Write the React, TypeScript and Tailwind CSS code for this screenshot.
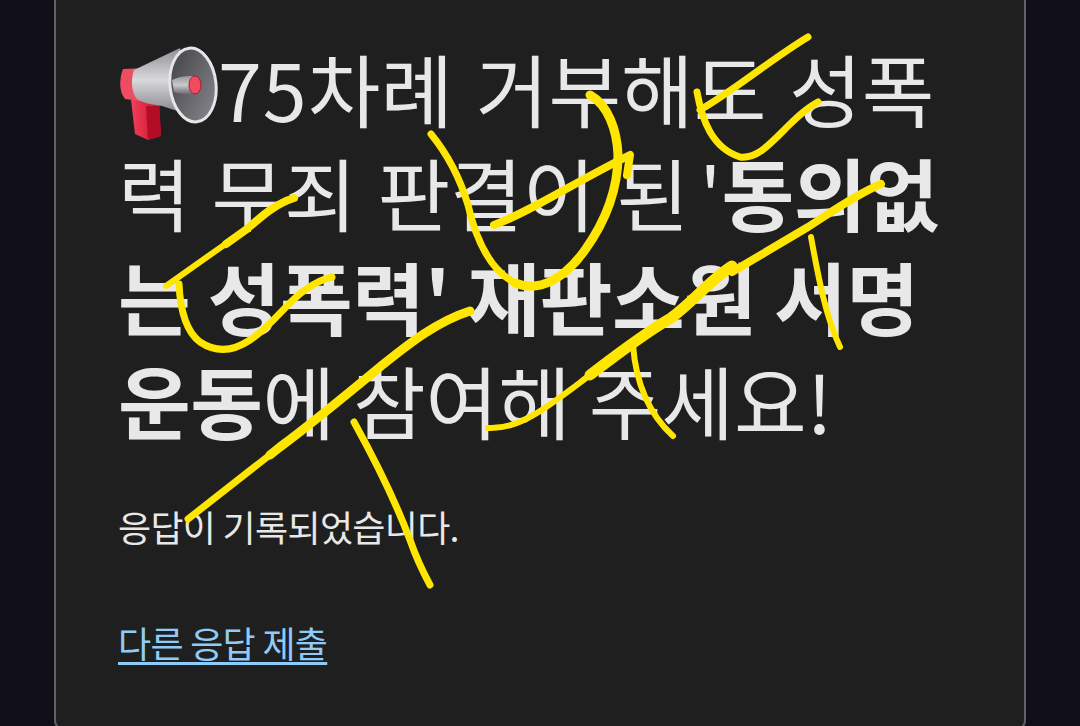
const strokes = [
  { d: "M166 286 L207 257 L247 229", w: 6 },
  { d: "M226 244 L247 229 C262 216 275 204 294 198", w: 8 },
  { d: "M179 284 C180 305 184 330 200 342 C215 352 232 352 250 340 C272 326 288 301 305 290 C315 283 322 279 332 277", w: 7 },
  { d: "M188 519 L280 447", w: 7 },
  { d: "M270 455 L280 447 C310 425 345 396 380 367 C405 347 435 322 470 311", w: 9 },
  { d: "M431 134 C448 155 460 178 468 205 C476 240 490 270 515 283", w: 7 },
  { d: "M515 283 C540 293 565 278 585 250 C605 222 618 190 618 155 C617 130 608 105 590 95", w: 9 },
  { d: "M494 225 C530 212 575 182 630 155 L627 175", w: 8 },
  { d: "M488 428 C520 430 550 405 590 375", w: 6 },
  { d: "M590 375 C620 352 650 330 671 318 C695 300 710 280 732 266", w: 11 },
  { d: "M732 272 L808 227 C830 213 855 195 881 184", w: 8 },
  { d: "M633 345 C636 385 650 415 673 436", w: 6 },
  { d: "M697 92 C702 120 712 148 740 157 C767 160 785 120 818 102", w: 7 },
  { d: "M700 110 C735 90 770 60 808 37", w: 7 },
  { d: "M811 237 C818 275 825 315 840 347", w: 6 },
  { d: "M354 422 C375 460 395 500 410 540 C417 560 423 572 430 585", w: 7 },
];

function Megaphone() {
  return (
    <svg viewBox="0 0 100 96" className="inline-block -my-[20px] h-[96px] w-[100px] align-baseline">
      <defs>
        <linearGradient id="cone" x1="0" y1="0" x2="0" y2="1">
          <stop offset="0" stopColor="#8f8f94" />
          <stop offset="0.45" stopColor="#d9d9dc" />
          <stop offset="1" stopColor="#77777d" />
        </linearGradient>
        <linearGradient id="bell" x1="0" y1="0" x2="1" y2="1">
          <stop offset="0" stopColor="#3f3f44" />
          <stop offset="1" stopColor="#8a8a90" />
        </linearGradient>
        <linearGradient id="inner" x1="0" y1="0" x2="0" y2="1">
          <stop offset="0" stopColor="#97979c" />
          <stop offset="0.5" stopColor="#c9c9cc" />
          <stop offset="1" stopColor="#6d6d72" />
        </linearGradient>
        <linearGradient id="red" x1="0" y1="0" x2="1" y2="0">
          <stop offset="0" stopColor="#f0405a" />
          <stop offset="1" stopColor="#c80f2c" />
        </linearGradient>
      </defs>
      <path d="M13 54 L41 52 L43 90 L30 94 L17 88 Z" fill="url(#red)" />
      <path d="M30 94 L43 90 L41 60 L28 60 Z" fill="#b30d25" />
      <path d="M5 23 C1 33 1 46 7 53 L22 55 L27 22 Z" fill="#ed4d63" />
      <path d="M16 24 L62 2 L84 73 L44 60 C30 58 22 56 18 52 C13 44 13 32 16 24 Z" fill="url(#cone)" />
      <ellipse cx="75" cy="39" rx="23" ry="37" transform="rotate(-6 75 39)" fill="url(#bell)" stroke="#e6e6e8" strokeWidth="3" />
      <path d="M54 34 C62 30 70 30 77 30 L77 48 C70 48 62 48 56 46 Z" fill="url(#inner)" />
      <ellipse cx="77" cy="39" rx="6" ry="9" fill="#f04b60" stroke="#a81c30" strokeWidth="1" />
    </svg>
  );
}

export default function App() {
  return (
    <div className="relative h-[726px] w-[1080px] overflow-hidden bg-[#100f18] font-['Noto_Sans_CJK_KR','Noto_Sans',sans-serif]">
      <div className="ml-[54px] box-border h-[732px] w-[972px] rounded-b-xl border-x-2 border-b-2 border-[#5f6368] bg-[#1f1f1f] pl-[62px] pt-[36px] text-[#e8e8e8]">
        <h1 className="h-[416px] whitespace-nowrap text-[79px] font-normal leading-[104px] [word-spacing:3px]">
          <span className="[word-spacing:5px]"><Megaphone /><span className="tracking-[1px]">75</span>차례 거부해도 성폭</span><br />
          력 무죄 판결이 된<span className="[word-spacing:-7px]"> '</span><b className="font-bold tracking-[-0.4px] [word-spacing:0px]">동의없</b><br />
          <b className="font-bold tracking-[-0.4px] [word-spacing:0px]">는 성폭력' 재판소원 서명</b><br />
          <span className="[word-spacing:0px]"><b className="font-bold tracking-[-0.4px]">운동</b>에 참여해 주세요!</span>
        </h1>
        <p className="mt-[50px] whitespace-nowrap text-[36px] leading-[48px] tracking-[-0.7px]">응답이 기록되었습니다.</p>
        <a className="mt-[68px] block w-fit whitespace-nowrap text-[36px] leading-[48px] tracking-[-0.7px] text-[#8ecbf7] underline decoration-[3px] underline-offset-[4px]">다른 응답 제출</a>
      </div>
      <svg viewBox="0 0 1080 726" className="absolute inset-0 h-[726px] w-[1080px]" fill="none">
        {strokes.map((s, i) => (
          <path key={i} d={s.d} stroke="#ffe600" strokeWidth={s.w} strokeLinecap="round" strokeLinejoin="round" />
        ))}
      </svg>
    </div>
  );
}
